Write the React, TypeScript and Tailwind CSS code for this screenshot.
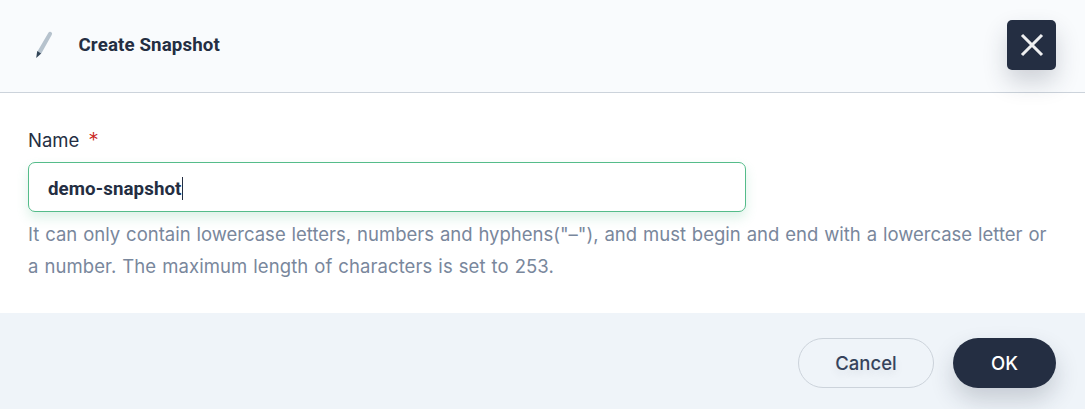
import React from "react";

function PencilIcon() {
  return (
    <svg width="32" height="32" viewBox="0 0 32 32" className="shrink-0" aria-hidden="true">
      <path d="M20.4 3.7a1.9 1.9 0 0 1 3.4 2L13.3 24.6l-3.9-2.1z" fill="#b6c2cd" />
      <path d="M9.2 22 13.2 24.4 8.2 28.9z" fill="#324558" />
    </svg>
  );
}

export default function App() {
  return (
    <div className="flex h-[409px] w-full flex-col bg-white font-['Inter',sans-serif] text-[#242e42]">
      <header className="relative flex h-[93px] items-start justify-between border-b border-[#ccd3db] bg-[#f9fbfd] pt-5 pr-[29px] pl-7">
        <div className="flex h-[50px] items-center">
          <PencilIcon />
          <h1 className="ml-[18.5px] font-['Roboto',sans-serif] text-[18.7px] leading-7 font-bold tracking-[0.13px] whitespace-nowrap">
            Create Snapshot
          </h1>
        </div>
        <button
          aria-label="Close"
          className="flex h-[50px] w-[49px] items-center justify-center rounded-[5px] bg-[#242e42] shadow-[0_12px_25px_0_rgba(36,46,66,0.2)]"
        >
          <svg width="24" height="24" viewBox="0 0 24 24" fill="none" stroke="#eeeff0" strokeWidth="3.1" aria-hidden="true">
            <path d="M2 2 22 22M22 2 2 22" />
          </svg>
        </button>
      </header>

      <main className="flex h-[220px] flex-col items-start px-7 pt-8">
        <label htmlFor="name" className="flex h-[37px] items-start text-[18.5px] leading-[30px]">
          Name
          <span className="ml-[9px] pt-px text-[21px] font-light text-[#ca2621]">*</span>
        </label>
        <div
          id="name"
          className="flex h-[50px] w-[718px] shrink-0 items-center rounded-[7px] border border-[#55bc8a] bg-white pl-[19px] shadow-[0_6px_12px_0_rgba(85,188,138,0.2)]"
        >
          <span className="pt-[3px] font-['Roboto',sans-serif] text-[18.7px] leading-6 font-bold tracking-[0.1px] whitespace-nowrap">
            demo-snapshot
          </span>
          <span className="mt-0.5 h-[23px] w-px bg-[#242e42]" />
        </div>
        <p className="mt-1.5 text-[18.5px] leading-8 whitespace-nowrap text-[#79879c] [word-spacing:0.7px]">
          <span className="block">
            It can only contain lowercase letters, numbers and hyphens("–"), and must begin and end with a lowercase letter or
          </span>
          <span className="block tracking-[0.08px]">a number. The maximum length of characters is set to 253.</span>
        </p>
      </main>

      <footer className="flex h-24 items-start justify-end gap-[19px] bg-[#eff4f9] pt-[25px] pr-[29px] text-[18.5px] font-medium">
        <button className="h-[50px] w-[136px] rounded-full border border-[#ccd3db] pt-0.5 text-[#36435c] [text-shadow:0_4px_8px_rgba(36,46,66,0.1)]">
          Cancel
        </button>
        <button className="h-[50px] w-[103px] rounded-full bg-[#242e42] pt-0.5 text-white shadow-[0_12px_25px_0_rgba(36,46,66,0.2)]">
          OK
        </button>
      </footer>
    </div>
  );
}
